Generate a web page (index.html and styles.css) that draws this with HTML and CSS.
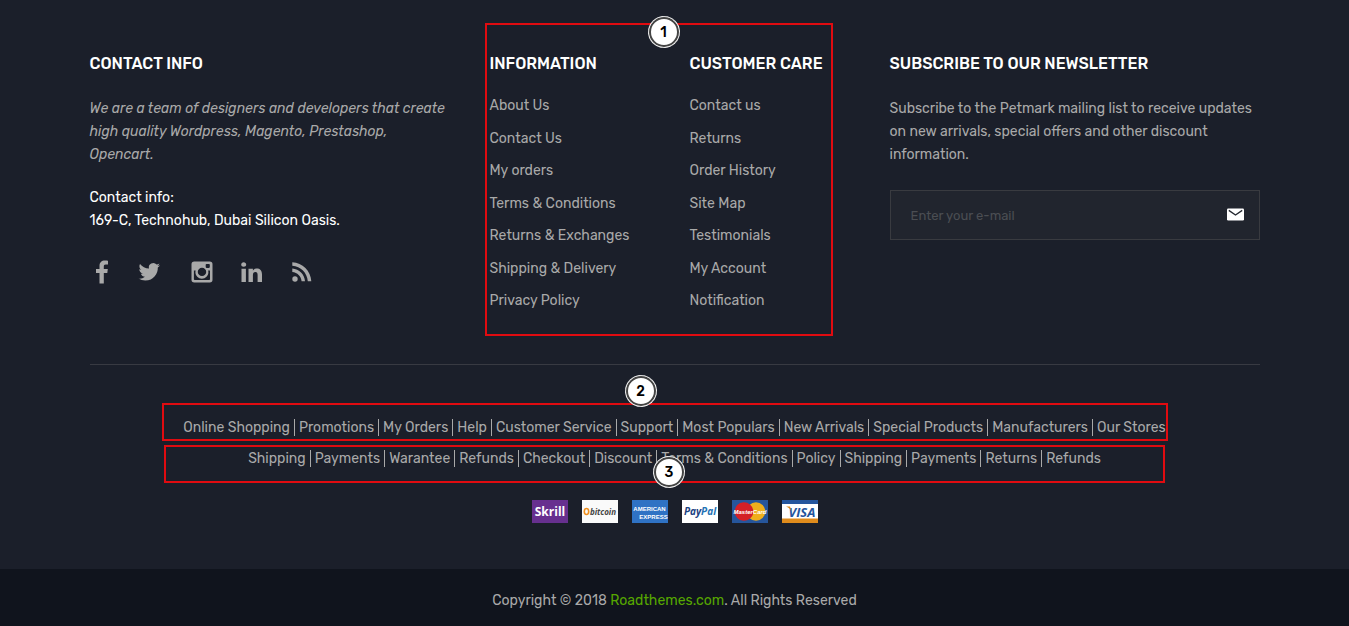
FILE: index.html
```html
<!DOCTYPE html>
<html lang="en">
<head>
<meta charset="utf-8">
<meta name="viewport" content="width=device-width, initial-scale=1">
<title>Petmark</title>
<link rel="stylesheet" href="styles.css">
</head>
<body>
<footer class="footer">
  <div class="container columns">
    <section class="col">
      <h2 class="title">Contact info</h2>
      <p class="text about">We are a team of designers and developers that create high quality Wordpress, Magento, Prestashop,<br>Opencart.</p>
      <p class="text address">Contact info:<br>169-C, Technohub, Dubai Silicon Oasis.</p>
      <div class="social">
        <a href="#" aria-label="Facebook"><svg viewBox="0 0 24 24"><path d="M18 .7v3.700h-2.200c-1.700 0-2 .8-2 2V9h4l-.5 4.100h-3.500V23.500H9.500V13.100H6V9h3.500V5.900C9.500 2.400 11.600.5 14.800.5c1.500 0 2.800.1 3.200.2z"/></svg></a>
        <a href="#" aria-label="Twitter"><svg viewBox="3 0 24 24"><path d="M23 5.200c-.8.400-1.600.6-2.500.7.900-.5 1.600-1.400 1.900-2.400-.8.500-1.800.9-2.800 1.100A4.400 4.400 0 0 0 12 8.600C8.400 8.400 5.100 6.700 3 4c-1.200 2-.6 4.500 1.300 5.800-.7 0-1.400-.2-2-.5 0 2.100 1.500 4 3.600 4.400-.6.200-1.300.2-2 .1.600 1.700 2.200 3 4.100 3A8.900 8.900 0 0 1 1.500 18.600c2 1.300 4.300 2 6.800 2 8.200 0 12.900-7 12.500-13.100.9-.6 1.600-1.400 2.200-2.300z"/></svg></a>
        <a href="#" aria-label="Instagram"><svg viewBox="0 0 24 24"><path fill-rule="evenodd" d="M4.200 1.500h15.600a2.700 2.700 0 0 1 2.700 2.700v15.600a2.700 2.700 0 0 1-2.700 2.700H4.200a2.700 2.700 0 0 1-2.700-2.700V4.200a2.700 2.700 0 0 1 2.700-2.700zM16.500 4c-.5 0-.8.300-.8.800v2.300c0 .5.300.8.800.8H19c.5 0 .8-.3.800-.8V4.800c0-.5-.3-.8-.8-.8zM3.900 10.400v8.800c0 .5.400.8.800.8h14.500c.5 0 .8-.3.800-.8v-8.800h-1.900c.2.600.3 1.200.3 1.900 0 3.600-2.900 6.400-6.500 6.400s-6.500-2.800-6.500-6.400c0-.7.1-1.300.3-1.900zM12 7.700a4.200 4.200 0 1 0 0 8.400 4.200 4.200 0 0 0 0-8.400z"/></svg></a>
        <a href="#" aria-label="LinkedIn"><svg viewBox="0 0 24 24"><path d="M1.500 8.800h4.400V22H1.500zM3.700 2.200c1.500 0 2.500 1 2.500 2.300S5.200 6.800 3.700 6.800 1.200 5.800 1.200 4.500s1-2.300 2.500-2.300zM8.500 8.800h4.400v1.900c.6-.9 1.600-2.200 4-2.200 2.900 0 5.100 1.900 5.100 6V22h-4.400v-7c0-1.800-.6-3-2.200-3-1.700 0-2.500 1.200-2.500 3v7H8.500z"/></svg></a>
        <a href="#" aria-label="RSS"><svg viewBox="0 0 24 24"><circle cx="5" cy="19" r="2.700"/><path d="M2.300 8.600c6.900.4 12.300 6 12.700 12.700h-3.400c-.4-5-4.300-8.900-9.300-9.300zM2.300 2.300c10.200.4 18.500 8.600 19 19h-3.500C17.300 12.900 10.700 6.200 2.300 5.700z"/></svg></a>
      </div>
    </section>
    <div class="col link-group">
      <section>
        <h2 class="title">Information</h2>
        <ul class="links">
          <li><a href="#">About Us</a></li>
          <li><a href="#">Contact Us</a></li>
          <li><a href="#">My orders</a></li>
          <li><a href="#">Terms &amp; Conditions</a></li>
          <li><a href="#">Returns &amp; Exchanges</a></li>
          <li><a href="#">Shipping &amp; Delivery</a></li>
          <li><a href="#">Privacy Policy</a></li>
        </ul>
      </section>
      <section>
        <h2 class="title">Customer care</h2>
        <ul class="links">
          <li><a href="#">Contact us</a></li>
          <li><a href="#">Returns</a></li>
          <li><a href="#">Order History</a></li>
          <li><a href="#">Site Map</a></li>
          <li><a href="#">Testimonials</a></li>
          <li><a href="#">My Account</a></li>
          <li><a href="#">Notification</a></li>
        </ul>
      </section>
      <div class="mark mark-one"><span class="badge">1</span></div>
    </div>
    <section class="col">
      <h2 class="title">Subscribe to our newsletter</h2>
      <p class="text">Subscribe to the Petmark mailing list to receive updates on new arrivals, special offers and other discount information.</p>
      <form class="subscribe">
        <input type="email" placeholder="Enter your e-mail" aria-label="Enter your e-mail">
        <button type="button" aria-label="Subscribe"><svg viewBox="0 0 17 13"><rect width="17" height="12" y=".5" rx="1.200" fill="#fff"/><path d="M1.800 2.400 8.500 7l6.700-4.600" fill="none" stroke="#22262e" stroke-width="1.300"/></svg></button>
      </form>
    </section>
  </div>
  <div class="container bottom">
    <div class="nav-row">
      <ul class="inline-links">
        <li><a href="#">Online Shopping</a></li><li><a href="#">Promotions</a></li><li><a href="#">My Orders</a></li><li><a href="#">Help</a></li><li><a href="#">Customer Service</a></li><li><a href="#">Support</a></li><li><a href="#">Most Populars</a></li><li><a href="#">New Arrivals</a></li><li><a href="#">Special Products</a></li><li><a href="#">Manufacturers</a></li><li><a href="#">Our Stores</a></li>
      </ul>
      <div class="mark mark-two"><span class="badge">2</span></div>
    </div>
    <div class="nav-row">
      <ul class="inline-links">
        <li><a href="#">Shipping</a></li><li><a href="#">Payments</a></li><li><a href="#">Warantee</a></li><li><a href="#">Refunds</a></li><li><a href="#">Checkout</a></li><li><a href="#">Discount</a></li><li><a href="#">Terms &amp; Conditions</a></li><li><a href="#">Policy</a></li><li><a href="#">Shipping</a></li><li><a href="#">Payments</a></li><li><a href="#">Returns</a></li><li><a href="#">Refunds</a></li>
      </ul>
      <div class="mark mark-three"><span class="badge">3</span></div>
    </div>
    <div class="payments">
      <svg viewBox="0 0 36 23" role="img"><rect width="36" height="23" fill="#67308f"/><text x="18" y="16" class="pay-skrill">Skrill</text></svg>
      <svg viewBox="0 0 36 23" role="img"><rect width="36" height="23" fill="#fafafa"/><ellipse cx="4.500" cy="11.500" rx="2.200" ry="3" fill="none" stroke="#f09020" stroke-width="1.600"/><text x="21" y="15" class="pay-bitcoin">bitcoin</text></svg>
      <svg viewBox="0 0 36 23" role="img"><rect width="36" height="23" fill="#2f72c4"/><text x="17.500" y="10.500" class="pay-amex">AMERICAN</text><text x="21.500" y="18.500" class="pay-amex">EXPRESS</text></svg>
      <svg viewBox="0 0 36 23" role="img"><rect width="36" height="23" fill="#fff"/><text x="18" y="15" class="pay-paypal">Pay<tspan fill="#2372b4">Pal</tspan></text></svg>
      <svg viewBox="0 0 36 23" role="img"><rect width="36" height="23" fill="#26559b"/><circle cx="24" cy="11.500" r="9.300" fill="#efaf1c"/><path d="M18 4.400a9.300 9.300 0 1 0 0 14.200 9.300 9.300 0 0 0 0-14.200z" fill="#d42027"/><text x="18" y="14" class="pay-master">MasterCard</text></svg>
      <svg viewBox="0 0 36 23" role="img"><rect width="36" height="23" fill="#fff"/><rect width="36" height="4" fill="#24559d"/><rect y="18.500" width="36" height="4.500" fill="#df8b1c"/><text x="20" y="16.500" class="pay-visa">VISA</text><path d="M4 6.500h4l1.800 5.300C8.800 9.400 7 7.500 4 6.500z" fill="#df8b1c"/></svg>
    </div>
  </div>
  <div class="copyright">Copyright © 2018 <a href="#">Roadthemes.com</a>. All Rights Reserved</div>
</footer>
</body>
</html>
```
FILE: styles.css
```css
* { box-sizing: border-box; }
body {
  margin: 0;
  background: #10141d;
  color: #a9a9a9;
  font-family: Rubik, Roboto, "Liberation Sans", sans-serif;
  font-size: 14px;
  line-height: 23px;
}
ul, p, h2 { margin: 0; padding: 0; }
ul { list-style: none; }
a { color: inherit; text-decoration: none; }
.footer { background: #1b1f2a; }
.container {
  width: calc(100% - 64px);
  max-width: 1170px;
  margin: 0 auto;
}
.columns {
  display: grid;
  grid-template-columns: repeat(3, 1fr);
  gap: 30px;
  padding: 52px 0 50px;
}
.title {
  color: #fff;
  font-size: 16px;
  font-weight: 500;
  line-height: 24px;
  text-transform: uppercase;
  white-space: nowrap;
}
.text { margin-top: 21px; }
.about { font-style: italic; }
.address { margin-top: 20px; color: #fff; }
.social {
  display: flex;
  gap: 26px;
  margin-top: 28px;
}
.social a { width: 24px; height: 24px; }
.social svg { display: block; width: 24px; height: 24px; fill: #a9a9a9; overflow: visible; }
.link-group {
  position: relative;
  display: grid;
  grid-template-columns: 1fr 1fr;
  gap: 30px;
}
.links {
  display: grid;
  gap: 8px;
  margin-top: 18px;
  line-height: 1.75;
}
.subscribe {
  display: flex;
  height: 50px;
  margin-top: 24px;
  background: #21252e;
  border: 1px solid #393b40;
}
.subscribe input {
  flex: 1;
  min-width: 0;
  padding: 0 20px;
  color: #a9a9a9;
  background: none;
  border: 0;
  font-family: inherit;
  font-size: 13px;
}
.subscribe input::placeholder { color: #4b4e53; opacity: 1; }
.subscribe button {
  width: 46px;
  padding: 0 14px 2px;
  background: none;
  border: 0;
}
.subscribe svg { display: block; width: 17px; height: 13px; }
.bottom {
  padding: 51px 0 46px;
  border-top: 1px solid #383a42;
}
.nav-row { position: relative; padding-bottom: 8px; }
.inline-links {
  display: flex;
  flex-wrap: wrap;
  justify-content: center;
}
.inline-links li { display: flex; align-items: center; white-space: nowrap; }
.inline-links li + li::before {
  content: "";
  height: 17px;
  margin: 0 4px;
  border-left: 1px solid #a9a9a9;
}
.payments {
  display: flex;
  justify-content: center;
  gap: 14px;
  padding-top: 22px;
}
.payments svg { width: 36px; height: 23px; }
.payments text {
  font-family: "Open Sans", sans-serif;
  font-weight: 700;
  text-anchor: middle;
  fill: #fff;
}
.payments .pay-skrill { font-size: 12px; }
.payments .pay-bitcoin { font-size: 8px; font-style: italic; fill: #444; }
.payments .pay-amex { font-family: "Liberation Sans", sans-serif; font-size: 6px; }
.payments .pay-paypal { font-size: 10px; font-style: italic; fill: #1c4282; }
.payments .pay-master { font-family: "Liberation Sans", sans-serif; font-size: 6px; font-style: italic; }
.payments .pay-visa { font-size: 13px; font-style: italic; fill: #24559d; }
.copyright {
  padding: 20px 0 14px;
  background: #10141d;
  text-align: center;
}
.copyright a { color: #56a700; }
.mark {
  position: absolute;
  border: 2px solid #e00b10;
  pointer-events: none;
}
.mark-one { top: -29px; bottom: -22px; left: -5px; right: 27px; }
.mark-two { top: -13px; bottom: 6px; left: 72px; right: 92px; }
.mark-three { top: -2px; bottom: -5px; left: 74px; right: 95px; }
.badge {
  position: absolute;
  left: 50%;
  width: 32px;
  height: 32px;
  border: 1px dashed #ddd;
  border-radius: 50%;
  box-shadow: inset 0 0 0 2px #444;
  background: #fff;
  color: #000;
  font-size: 14px;
  font-weight: 500;
  line-height: 32px;
  text-align: center;
}
.mark-one .badge { top: -9px; margin-left: -11px; }
.mark-two .badge { top: -30px; margin-left: -40px; }
.mark-three .badge { top: 9px; margin-left: -11px; }
```
